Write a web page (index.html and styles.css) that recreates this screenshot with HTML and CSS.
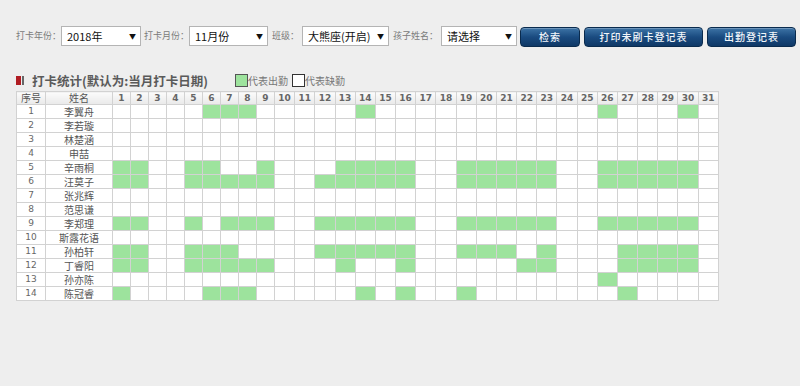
FILE: index.html
```html
<!DOCTYPE html>
<html lang="zh">

<head>
    <meta charset="UTF-8">
    <meta name="viewport" content="width=device-width, initial-scale=1.0">
    <title>打卡统计</title>
    <link rel="stylesheet" href="styles.css">
</head>

<body>
    <div class="page">
        <div class="toolbar">
            <span class="lbl w45">打卡年份：</span>
            <div class="sel w80"><span>2018年</span><span class="arrow">▼</span></div>
            <span class="lbl w45 ml3">打卡月份：</span>
            <div class="sel w79"><span>11月份</span><span class="arrow">▼</span></div>
            <span class="lbl w30 ml4">班级：</span>
            <div class="sel w87"><span>大熊座(开启)</span><span class="arrow">▼</span></div>
            <span class="lbl w48 ml4">孩子姓名：</span>
            <div class="sel w76"><span>请选择</span><span class="arrow">▼</span></div>
            <button class="btn b1">检索</button>
            <button class="btn b2">打印未刷卡登记表</button>
            <button class="btn b3">出勤登记表</button>
        </div>

        <div class="head">
            <span class="mark"><i class="red"></i><i class="grey"></i></span>
            <h3>打卡统计(默认为:当月打卡日期)</h3>
            <span class="box on"></span><span class="legend">代表出勤</span>
            <span class="box off"></span><span class="legend">代表缺勤</span>
        </div>

        <table class="grid">
            <colgroup>
                <col class="c-no">
                <col class="c-name">
                <col class="c-day"><col class="c-day"><col class="c-day">
                <col class="c-day"><col class="c-day"><col class="c-day">
                <col class="c-day"><col class="c-day"><col class="c-day">
            </colgroup>
            <thead>
                <tr id="headRow">
                    <th class="cn">序号</th>
                    <th class="cn">姓名</th>
                </tr>
            </thead>
            <tbody id="rows">

            </tbody>
        </table>
    </div>

    <script src="script.js"></script>
</body>

</html>
```

FILE: styles.css
```css
* {
    margin: 0;
    padding: 0;
}

body {
    background: #eeeeee;
    font-family: "Noto Sans CJK SC", "Noto Sans", sans-serif;
}

.page {
    padding: 25px 0 0 16px;
}

/* top filter bar */
.toolbar {
    display: flex;
    align-items: center;
    height: 21px;
}

.lbl {
    font-size: 9px;
    color: #7a7a7a;
    white-space: nowrap;
}

.w30 { width: 30px; }
.w45 { width: 45px; }
.w48 { width: 48px; }
.w76 { width: 76px; }
.w79 { width: 79px; }
.w80 { width: 80px; }
.w87 { width: 87px; }
.ml3 { margin-left: 3px; }
.ml4 { margin-left: 4px; }

.sel {
    box-sizing: border-box;
    height: 20px;
    border: 1px solid #b4b4b4;
    background: #fff;
    display: flex;
    align-items: center;
    justify-content: space-between;
    padding: 0 4px 0 5px;
    font-size: 11px;
    color: #111;
}

.sel .arrow {
    font-size: 7px;
}

.btn {
    box-sizing: border-box;
    height: 20px;
    margin-top: 2px;
    border: 1px solid #0a2b4e;
    border-radius: 4px;
    background: linear-gradient(#3d74a6, #1a4b80 50%, #0f3866);
    box-shadow: inset 0 1px 0 rgba(255, 255, 255, 0.25);
    color: #f2f6fa;
    font-family: "Noto Sans CJK SC", sans-serif;
    font-size: 10px;
    font-weight: 500;
    letter-spacing: 1px;
}

.b1 { width: 60px; margin-left: 3px; }
.b2 { width: 119px; margin-left: 4px; }
.b3 { width: 89px; margin-left: 4px; }

/* title + legend */
.head {
    display: flex;
    align-items: center;
    height: 20px;
    margin-top: 24px;
}

.mark {
    display: flex;
    gap: 1px;
    width: 16px;
}

.mark i {
    display: block;
    height: 9px;
}

.mark .red {
    width: 5px;
    background: #b01c22;
}

.mark .grey {
    width: 2px;
    background: #666;
}

.head h3 {
    font-size: 12.5px;
    font-weight: bold;
    color: #5a5a5a;
    width: 203px;
}

.box {
    box-sizing: border-box;
    width: 13px;
    height: 13px;
    border: 1px solid #333;
}

.box.on {
    background: #9de39d;
    border-color: #555;
}

.box.off {
    background: #fff;
    margin-left: 4px;
}

.legend {
    font-size: 10px;
    color: #777;
}

/* attendance table */
.grid {
    margin-top: 1px;
    width: 703px;
    table-layout: fixed;
    border-collapse: collapse;
    background: #fff;
}

.c-no { width: 29px; }
.c-name { width: 67px; }
.c-day { width: 18px; }

.grid th,
.grid td {
    border: 1px solid #d2d2d2;
    padding: 0;
    text-align: center;
    overflow: hidden;
    white-space: nowrap;
}

.grid th {
    height: 12px;
    line-height: 12px;
    background: linear-gradient(#fbfbfb, #e9e9e9);
    font-family: "DejaVu Sans", sans-serif;
    font-size: 9px;
    font-weight: bold;
    color: #666;
}

.grid th.cn {
    font-family: "Noto Sans CJK SC", sans-serif;
    font-size: 10px;
    font-weight: normal;
    color: #555;
}

.grid td {
    height: 13px;
    line-height: 13px;
    font-size: 10px;
    color: #666;
}

.grid td.no {
    font-family: "DejaVu Sans", sans-serif;
    font-size: 9px;
}

.grid td.name {
    color: #555;
}

.grid td.on {
    background: #9de39d;
}
```

FILE: script.js
```js
let headRow = document.querySelector('#headRow')
let rows = document.querySelector('#rows')

for (let d = 1; d <= 31; d++) {
    headRow.innerHTML += `<th>${d}</th>`
}

// days with a card record, per child
let kids = [
    ['李翼舟', [6, 7, 8, 14, 26, 30]],
    ['李若璇', []],
    ['林楚涵', []],
    ['申喆', []],
    ['辛雨桐', [1, 2, 5, 6, 9, 13, 14, 15, 16, 19, 20, 21, 22, 23, 26, 27, 28, 29, 30]],
    ['汪莫子', [1, 2, 5, 6, 7, 8, 9, 12, 13, 14, 15, 16, 19, 20, 21, 22, 23, 26, 27, 28, 29, 30]],
    ['张兆辉', []],
    ['范思谦', []],
    ['李郑理', [1, 2, 5, 7, 8, 9, 12, 13, 14, 15, 16, 19, 20, 21, 22, 23, 26, 27, 28, 29, 30]],
    ['斯露花语', []],
    ['孙柏轩', [1, 2, 5, 6, 7, 12, 13, 14, 15, 16, 19, 20, 21, 23, 27, 28, 29, 30]],
    ['丁睿阳', [1, 2, 5, 6, 7, 8, 9, 13, 16, 22, 23, 27, 28, 29, 30]],
    ['孙亦陈', [26]],
    ['陈冠睿', [1, 6, 7, 8, 14, 16, 19, 27]]
]

kids.forEach(function (kid, i) {
    let html = `<td class="no">${i + 1}</td><td class="name">${kid[0]}</td>`
    for (let d = 1; d <= 31; d++) {
        html += kid[1].includes(d) ? '<td class="on"></td>' : '<td></td>'
    }
    rows.innerHTML += `<tr>${html}</tr>`
})
```
